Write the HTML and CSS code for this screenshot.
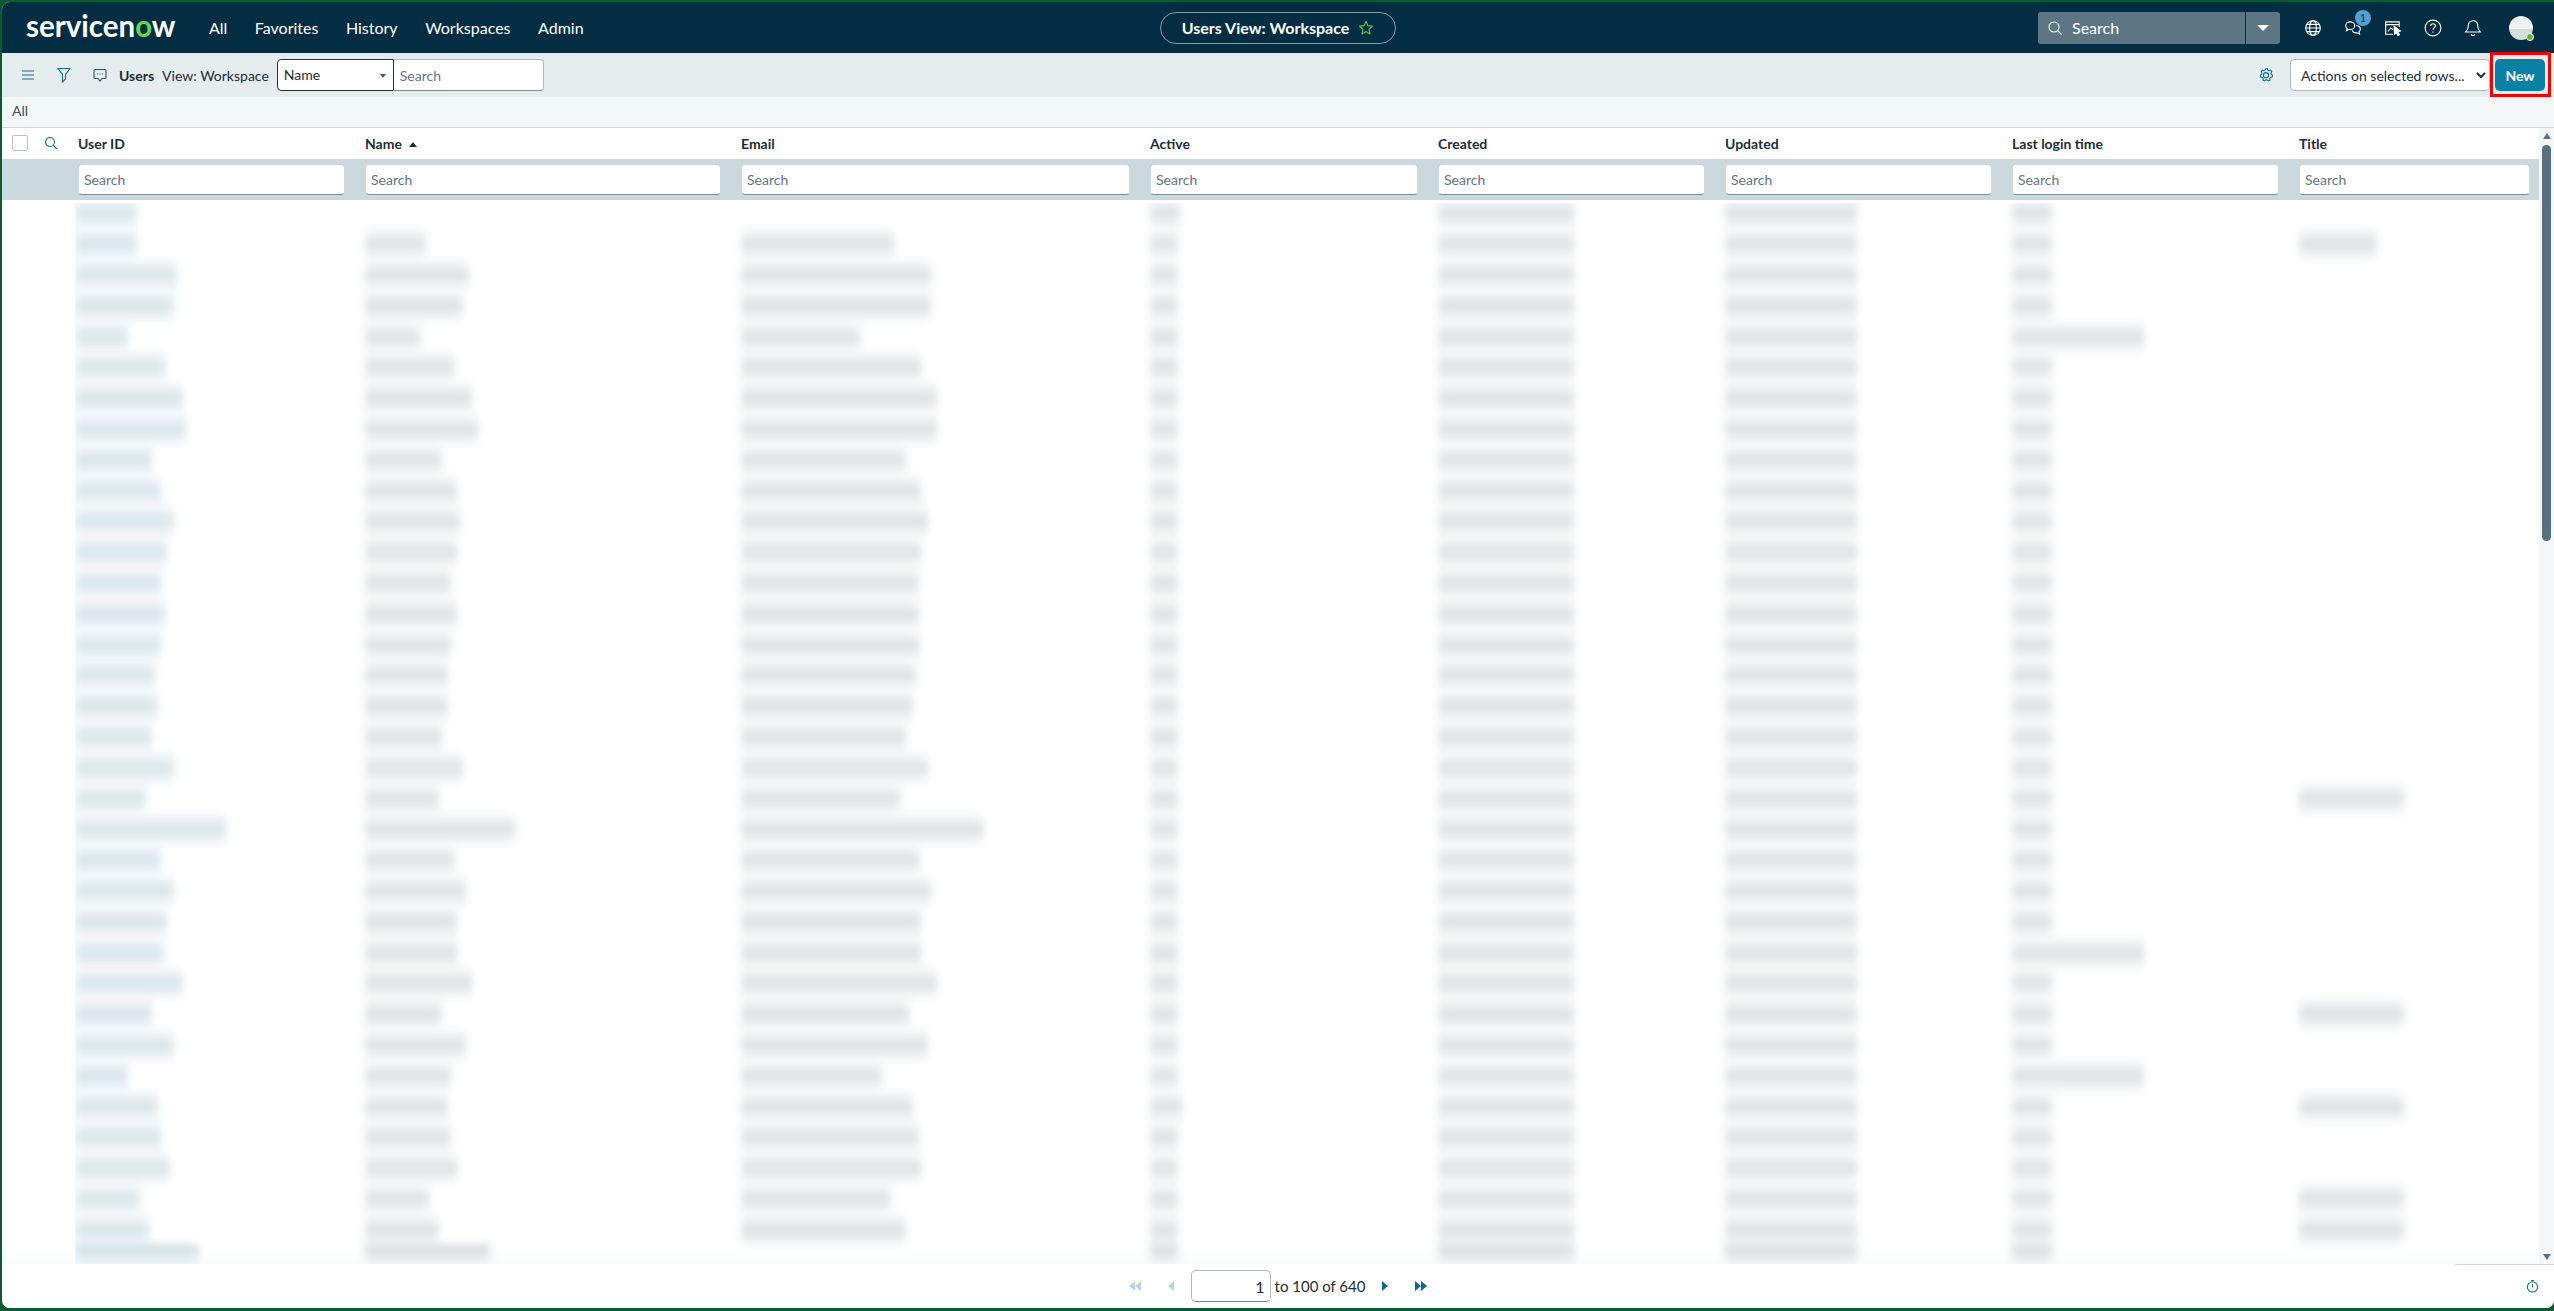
FILE: index.html
```html
<!DOCTYPE html>
<html lang="en">

<head>
    <meta charset="UTF-8">
    <title>Users View: Workspace</title>
    <link rel="stylesheet" href="styles.css">
</head>

<body>
    <div class="app">

        <header class="topbar">
            <div class="topbar-left">
                <span class="logo">servicen<span class="logo-o">o</span>w</span>
                <nav class="nav">
                    <a>All</a>
                    <a>Favorites</a>
                    <a>History</a>
                    <a>Workspaces</a>
                    <a>Admin</a>
                </nav>
            </div>
            <div class="pill">
                <span>Users View: Workspace</span>
                <svg class="pill-star" viewBox="0 0 16 16" width="16" height="16">
                    <path d="M8 1.500l1.900 4.200 4.600.5-3.400 3.100.9 4.600L8 11.600l-4 2.300.9-4.600L1.500 6.200l4.600-.5z" fill="none" stroke="#5cc04a" stroke-width="1.200" stroke-linejoin="round"/>
                </svg>
            </div>
            <div class="topbar-right">
                <div class="global-search">
                    <svg viewBox="0 0 16 16" width="16" height="16">
                        <circle cx="7" cy="7" r="5" fill="none" stroke="#fff" stroke-width="1.100"/>
                        <path d="M10.700 10.700l4 4" stroke="#fff" stroke-width="1.100"/>
                    </svg>
                    <span class="global-search-text">Search</span>
                    <span class="global-search-drop"><i class="caret-white"></i></span>
                </div>
                <div class="top-icons">
                    <svg class="top-icon" viewBox="0 0 16 16">
                        <circle cx="8" cy="8" r="6.500"/>
                        <ellipse cx="8" cy="8" rx="3" ry="6.500"/>
                        <path d="M1.500 8h13M2.400 4.800h11.200M2.400 11.200h11.200"/>
                    </svg>
                    <div class="chat-icon">
                        <svg class="top-icon" viewBox="0 0 16 16">
                            <path d="M5.500 2.500c-2.200 0-4 1.500-4 3.400 0 1 .5 1.900 1.300 2.500l-.5 1.900 2.200-1.100c.3.100.7.100 1 .1 2.200 0 4-1.500 4-3.400s-1.800-3.400-4-3.400z"/>
                            <path d="M10.800 5.800c2 .2 3.700 1.500 3.700 3.300 0 .9-.5 1.700-1.200 2.300l.5 1.900-2.200-1c-1.900.3-3.800-.6-4.300-2.200"/>
                        </svg>
                        <span class="badge">1</span>
                    </div>
                    <svg class="top-icon" viewBox="0 0 16 16">
                        <path d="M13.500 7V2.500h-12v11H8M1.500 5h12"/>
                        <path d="M3.500 11l2.500-3 2 1.500"/>
                        <path d="M9 6.500l5.500 4.200-2.300.5 1.500 2.800-1.300.6-1.400-2.800-1.600 1.500z" fill="#fff"/>
                    </svg>
                    <svg class="top-icon" viewBox="0 0 16 16">
                        <circle cx="8" cy="8" r="7"/>
                        <path d="M5.900 6.200c0-1.200 1-2 2.100-2s2.100.8 2.100 1.900c0 1.700-2.100 1.700-2.100 3.400"/>
                        <path d="M8 11.200v1"/>
                    </svg>
                    <svg class="top-icon" viewBox="0 0 16 16">
                        <path d="M8 1.500c-2.600 0-4.200 2-4.200 4.500 0 3.300-1.600 4.700-2.300 5.500h13c-.7-.8-2.300-2.200-2.300-5.500 0-2.500-1.600-4.500-4.200-4.500z"/>
                        <path d="M6.300 13.500c.3.800 1 1.200 1.700 1.200s1.400-.4 1.700-1.200"/>
                    </svg>
                    <div class="avatar"><span class="avatar-dot"></span></div>
                </div>
            </div>
        </header>

        <div class="toolbar">
            <svg class="tool-icon hamburger" viewBox="0 0 14 12">
                <path d="M1 2h12M1 6h12M1 10h12"/>
            </svg>
            <svg class="tool-icon funnel" viewBox="0 0 14 16">
                <path d="M1 1.500h12l-4.500 6v4.500l-3 3v-7.500z"/>
            </svg>
            <svg class="tool-icon bubble" viewBox="0 0 14 14">
                <path d="M2 1.500h10a1 1 0 0 1 1 1v7a1 1 0 0 1-1 1H9l-2 2.500-2-2.500H2a1 1 0 0 1-1-1v-7a1 1 0 0 1 1-1z"/>
                <path d="M4 6h1M6.500 6h1M9 6h1"/>
            </svg>
            <span class="toolbar-title">Users</span>
            <span class="toolbar-view">View: Workspace</span>
            <div class="search-group">
                <div class="search-field">Name<i class="caret-small"></i></div>
                <input class="search-input" type="text" placeholder="Search">
            </div>
            <div class="toolbar-right">
                <svg class="tool-icon gear" viewBox="0 0 16 16">
                    <path d="M8 1.500l1.300.1.500 1.500 1.200.6 1.500-.6 1.300 1.500-.8 1.400.2 1.300 1.300 1-.3 1.800-1.600.3-.8 1.100.2 1.600-1.700.8-1.200-1-1.300 0-1.200 1-1.700-.8.200-1.600-.8-1.100-1.600-.3-.3-1.800 1.300-1 .2-1.300-.8-1.400 1.300-1.500 1.500.6 1.200-.6z"/>
                    <circle cx="8" cy="8.200" r="2.600"/>
                </svg>
                <select class="actions-select">
                    <option>Actions on selected rows...</option>
                </select>
                <div class="new-wrap">
                    <button class="new-btn">New</button>
                </div>
            </div>
        </div>

        <div class="breadcrumb">All</div>

        <div class="main">
            <div class="table">
                <div class="grid head-row">
                    <div class="head-tools">
                        <span class="checkbox"></span>
                        <svg class="tool-icon head-search" viewBox="0 0 14 14">
                            <circle cx="6" cy="6" r="4.500"/>
                            <path d="M9.300 9.300l3.700 3.700"/>
                        </svg>
                    </div>
                    <div class="head-cell">User ID</div>
                    <div class="head-cell">Name <i class="sort-up"></i></div>
                    <div class="head-cell">Email</div>
                    <div class="head-cell">Active</div>
                    <div class="head-cell">Created</div>
                    <div class="head-cell">Updated</div>
                    <div class="head-cell">Last login time</div>
                    <div class="head-cell">Title</div>
                </div>
                <div class="grid filter-row">
                    <div></div>
                    <div class="filter-cell"><input type="text" placeholder="Search"></div>
                    <div class="filter-cell"><input type="text" placeholder="Search"></div>
                    <div class="filter-cell"><input type="text" placeholder="Search"></div>
                    <div class="filter-cell"><input type="text" placeholder="Search"></div>
                    <div class="filter-cell"><input type="text" placeholder="Search"></div>
                    <div class="filter-cell"><input type="text" placeholder="Search"></div>
                    <div class="filter-cell"><input type="text" placeholder="Search"></div>
                    <div class="filter-cell"><input type="text" placeholder="Search"></div>
                </div>
                <div class="table-body">
                    <div class="rows" id="rows"></div>
                </div>
            </div>
            <div class="scrollbar">
                <i class="scroll-up"></i>
                <div class="scroll-thumb"></div>
                <i class="scroll-down"></i>
            </div>
        </div>

        <footer class="footer">
            <div></div>
            <div class="pager">
                <svg class="pager-btn first off" viewBox="0 0 12 10"><path d="M6 0v10L0 5zM12 0v10L6 5z"/></svg>
                <svg class="pager-btn prev off" viewBox="0 0 6 10"><path d="M6 0v10L0 5z"/></svg>
                <input class="pager-input" type="text" value="1">
                <span class="pager-text">to 100 of 640</span>
                <svg class="pager-btn next" viewBox="0 0 6 10"><path d="M0 0v10l6-5z"/></svg>
                <svg class="pager-btn last" viewBox="0 0 12 10"><path d="M0 0v10l6-5zM6 0v10l6-5z"/></svg>
            </div>
            <svg class="tool-icon timer" viewBox="0 0 14 14">
                <circle cx="7" cy="8" r="5.500"/>
                <path d="M5.500 1h3M7 5v3.500"/>
            </svg>
        </footer>

    </div>
    <script src="script.js"></script>
</body>

</html>
```

FILE: styles.css
```css
* {
    box-sizing: border-box;
}

html,
body {
    height: 100%;
}

body {
    margin: 0;
    padding: 2px 0 3px 2px;
    background-color: #0c5a33;
    font-family: Lato, "Open Sans", sans-serif;
    font-size: 14px;
    color: #1d2d38;
    overflow: hidden;
}

input,
select,
button {
    font-family: inherit;
    font-size: 14px;
}

input::placeholder {
    color: #66757f;
}

.app {
    height: 100%;
    display: flex;
    flex-direction: column;
    background: white;
    border-radius: 8px 0 8px 8px;
    overflow: hidden;
}

/* top bar */
.topbar {
    height: 51px;
    flex: none;
    display: grid;
    grid-template-columns: 1fr auto 1fr;
    align-items: center;
    background-color: #032d42;
    color: white;
}

.topbar-left {
    display: flex;
    align-items: center;
    padding-left: 24px;
}

.logo {
    width: 183px;
    font-size: 29.500px;
    font-weight: 700;
    letter-spacing: 0;
    line-height: 28px;
    margin-top: -3px;
}

.logo-o {
    color: #62d84e;
}

.nav {
    display: flex;
    gap: 27.500px;
    font-size: 16px;
}

.pill {
    width: 236px;
    height: 32px;
    display: flex;
    align-items: center;
    justify-content: center;
    gap: 9px;
    border: 1px solid #8b9ba5;
    border-radius: 16px;
    font-size: 16px;
    font-weight: 700;
}

.topbar-right {
    display: flex;
    align-items: center;
    justify-content: flex-end;
    padding-right: 21px;
}

.global-search {
    width: 242px;
    height: 32px;
    display: flex;
    align-items: center;
    padding-left: 9px;
    background-color: #5c7684;
    border-radius: 3px;
    font-size: 16px;
}

.global-search-text {
    flex: 1;
    padding-left: 9px;
}

.global-search-drop {
    width: 35px;
    height: 32px;
    display: flex;
    align-items: center;
    justify-content: center;
    border-left: 1px solid #032d42;
}

.caret-white {
    border-left: 6px solid transparent;
    border-right: 6px solid transparent;
    border-top: 6px solid white;
}

.top-icons {
    display: flex;
    align-items: center;
    margin-left: 24px;
    gap: 22px;
}

.top-icon {
    display: block;
    width: 18px;
    height: 18px;
    flex: none;
    fill: none;
    stroke: white;
    stroke-width: 1;
}

.chat-icon {
    position: relative;
}

.badge {
    position: absolute;
    top: -9px;
    left: 11px;
    width: 16px;
    height: 16px;
    border-radius: 50%;
    background-color: #4f9fd8;
    color: #0d2c40;
    font-size: 11px;
    line-height: 16px;
    text-align: center;
}

.avatar {
    position: relative;
    width: 24px;
    height: 24px;
    margin-left: 5px;
    border-radius: 50%;
    background: linear-gradient(#eef2f1 55%, #d5dedc 55%);
}

.avatar-dot {
    position: absolute;
    right: -1px;
    bottom: -1px;
    width: 8px;
    height: 8px;
    border-radius: 50%;
    background-color: #62b02c;
    border: 1.500px solid white;
}

/* list toolbar */
.toolbar {
    height: 44px;
    flex: none;
    display: flex;
    align-items: center;
    background-color: #e5ecee;
    padding-right: 9px;
}

.tool-icon {
    flex: none;
    fill: none;
    stroke: #0b6f8f;
    stroke-width: 1.100;
}

.hamburger {
    width: 14px;
    height: 12px;
    margin-left: 19px;
}

.funnel {
    width: 14px;
    height: 16px;
    margin-left: 22px;
}

.bubble {
    width: 14px;
    height: 14px;
    margin-left: 22px;
    stroke: #32505f;
}

.toolbar-title {
    margin-left: 12px;
    font-weight: 700;
}

.toolbar-view {
    margin-left: 8px;
}

.search-group {
    display: flex;
    margin-left: 8px;
}

.search-field {
    position: relative;
    width: 117px;
    height: 32px;
    padding-left: 6px;
    line-height: 30px;
    background: white;
    border: 1px solid #23333f;
    border-radius: 4px 0 0 4px;
}

.caret-small {
    position: absolute;
    right: 7px;
    top: 14px;
    border-left: 3px solid transparent;
    border-right: 3px solid transparent;
    border-top: 4px solid #4a5a64;
}

.search-input {
    width: 150px;
    height: 32px;
    padding: 0 6px;
    background: white;
    border: 1px solid #a9bac3;
    border-left: none;
    border-bottom-color: #7d929e;
    border-radius: 0 4px 4px 0;
}

.toolbar-right {
    margin-left: auto;
    display: flex;
    align-items: center;
}

.gear {
    width: 16px;
    height: 16px;
    margin-right: 16px;
}

.actions-select {
    width: 200px;
    height: 32px;
    padding-left: 6px;
    color: #1d2d38;
    background: white;
    border: 1px solid #a9bac3;
    border-radius: 4px;
}

.new-wrap {
    position: relative;
    margin-left: 5px;
}

/* red box drawn on the screenshot */
.new-wrap::after {
    content: "";
    position: absolute;
    top: -7px;
    bottom: -6px;
    left: -5px;
    right: -6px;
    border: 3px solid #f00000;
}

.new-btn {
    display: block;
    width: 50px;
    height: 32px;
    padding: 0;
    color: white;
    background-color: #0b80a6;
    border: none;
    border-radius: 5px;
    font-weight: 700;
}

.breadcrumb {
    height: 31px;
    flex: none;
    padding: 5px 0 0 10px;
    color: #3e4f5a;
    background-color: #f3f7f7;
    border-bottom: 1px solid #cbd7dc;
}

/* table */
.main {
    flex: 1;
    min-height: 0;
    display: flex;
}

.table {
    flex: 1;
    min-width: 0;
    display: flex;
    flex-direction: column;
}

.grid {
    display: grid;
    grid-template-columns: 76px 287px 376px 409px 288px 287px 287px 287px 1fr;
}

.head-row {
    height: 31px;
    flex: none;
    align-items: center;
    padding-bottom: 1px;
}

.head-tools {
    display: flex;
    align-items: center;
}

.checkbox {
    width: 16px;
    height: 16px;
    margin-left: 10px;
    border: 1px solid #b4c3cb;
    border-radius: 2px;
}

.head-search {
    width: 14px;
    height: 14px;
    margin-left: 16px;
}

.head-cell {
    font-weight: 700;
}

.sort-up {
    display: inline-block;
    margin-left: 4px;
    vertical-align: 2px;
    border-left: 4px solid transparent;
    border-right: 4px solid transparent;
    border-bottom: 5px solid #1d2d38;
}

.filter-row {
    height: 41px;
    flex: none;
    align-items: center;
    background-color: #cbd8dd;
}

.filter-cell {
    padding-right: 20px;
}

.filter-cell:last-child {
    padding-right: 9px;
}

.filter-cell input {
    display: block;
    width: 100%;
    height: 31px;
    padding: 0 5px;
    background: white;
    border: 1px solid #cbd8dd;
    border-bottom-color: #7d929e;
    border-radius: 4px;
}

.table-body {
    position: relative;
    flex: 1;
    min-height: 0;
    margin-top: 3px;
    overflow: hidden;
}

/* soft fade above the footer */
.table-body::after {
    content: "";
    position: absolute;
    left: 0;
    right: 0;
    bottom: 0;
    height: 20px;
    background: linear-gradient(rgba(249, 251, 251, 0), rgba(249, 251, 251, 0.8));
}

.rows {
    margin-top: -5px;
}

.row {
    height: 30.800px;
    align-items: center;
}

.bar {
    height: 30px;
    background: linear-gradient(#f1f2f2 25%, #dfe1e4 38%, #dfe1e4 62%, #f1f2f2 75%);
    filter: blur(4px);
}

.cell-id {
    clip-path: inset(-20px -60px -20px 0);
    margin-left: -3px;
}

.cell-id .bar {
    background: linear-gradient(#edf3f5 25%, #d9e6ea 38%, #d9e6ea 62%, #edf3f5 75%);
}

.row:last-child .bar {
    background: #d3d7d9;
}

.row:last-child .cell-id .bar {
    background: #c6dae1;
}

/* scrollbar */
.scrollbar {
    width: 15px;
    flex: none;
    display: flex;
    flex-direction: column;
    align-items: center;
    padding: 5px 0 4px;
    background-color: #f3f7f7;
}

.scroll-up {
    border-left: 4px solid transparent;
    border-right: 4px solid transparent;
    border-bottom: 6px solid #55707f;
}

.scroll-thumb {
    width: 9px;
    height: 396px;
    margin-top: 6px;
    margin-bottom: auto;
    background-color: #55707f;
    border-radius: 5px;
}

.scroll-down {
    border-left: 4px solid transparent;
    border-right: 4px solid transparent;
    border-top: 6px solid #55707f;
}

/* footer */
.footer {
    position: relative;
    height: 44px;
    flex: none;
    display: grid;
    grid-template-columns: 1fr auto 1fr;
    align-items: center;
    background: white;
}

.footer::before {
    content: "";
    position: absolute;
    top: 0;
    right: 0;
    width: 99px;
    border-top: 1px solid #cbd8dd;
}

.pager {
    display: flex;
    align-items: center;
    font-size: 15px;
}

.pager-btn {
    height: 10px;
    flex: none;
    fill: #0b6a8b;
}

.pager-btn.off {
    fill: #b5d3dc;
}

.first {
    width: 12px;
}

.prev {
    width: 6px;
    margin-left: 27px;
}

.pager-input {
    width: 80px;
    height: 32px;
    margin-left: 17px;
    padding: 0 5px;
    font-size: 16px;
    text-align: right;
    color: #1d2d38;
    border: 1px solid #a9bac3;
    border-bottom-color: #6e8592;
    border-radius: 5px;
}

.pager-text {
    margin-left: 4px;
}

.next {
    width: 6px;
    margin-left: 17px;
}

.last {
    width: 12px;
    margin-left: 27px;
}

.timer {
    width: 13px;
    height: 14px;
    justify-self: end;
    margin-right: 15px;
}
```

FILE: script.js
```js
// widths of the masked values, one entry per row: id, name, email, active, created, updated, login, title
const widths = [
    [62, 0, 0, 30, 136, 132, 40, 0],
    [62, 61, 153, 28, 136, 132, 40, 78],
    [102, 104, 190, 28, 136, 132, 40, 0],
    [99, 98, 190, 28, 136, 132, 40, 0],
    [53, 55, 119, 28, 136, 132, 132, 0],
    [90, 89, 180, 28, 136, 132, 40, 0],
    [108, 107, 196, 28, 136, 132, 40, 0],
    [111, 113, 196, 28, 136, 132, 40, 0],
    [77, 77, 165, 28, 136, 132, 40, 0],
    [86, 92, 180, 28, 136, 132, 40, 0],
    [99, 95, 187, 28, 136, 132, 40, 0],
    [92, 92, 180, 28, 136, 132, 40, 0],
    [86, 86, 178, 28, 136, 132, 40, 0],
    [90, 92, 178, 28, 136, 132, 40, 0],
    [86, 86, 178, 28, 136, 132, 40, 0],
    [80, 83, 175, 28, 136, 132, 40, 0],
    [83, 83, 172, 28, 136, 132, 40, 0],
    [77, 77, 165, 28, 136, 132, 40, 0],
    [99, 98, 187, 28, 136, 132, 40, 0],
    [71, 74, 159, 28, 136, 132, 40, 105],
    [151, 150, 242, 28, 136, 132, 40, 0],
    [86, 89, 178, 28, 136, 132, 40, 0],
    [99, 101, 190, 28, 136, 132, 40, 0],
    [92, 92, 180, 28, 136, 132, 40, 0],
    [89, 92, 180, 28, 136, 132, 132, 0],
    [108, 107, 196, 28, 136, 132, 40, 0],
    [77, 77, 168, 28, 136, 132, 40, 105],
    [99, 101, 187, 28, 136, 132, 40, 0],
    [53, 86, 141, 28, 136, 132, 132, 0],
    [83, 83, 172, 32, 136, 132, 40, 105],
    [86, 86, 178, 28, 136, 132, 40, 0],
    [95, 92, 180, 28, 136, 132, 40, 0],
    [65, 64, 150, 28, 136, 132, 40, 105],
    [74, 74, 165, 28, 136, 132, 40, 105],
    [123, 125, 0, 28, 136, 132, 40, 0]
];

const rows = document.getElementById('rows');

widths.forEach(function (row) {
    const el = document.createElement('div');
    el.className = 'grid row';
    el.appendChild(document.createElement('div'));

    row.forEach(function (width, i) {
        const cell = document.createElement('div');
        if (i === 0) {
            cell.className = 'cell-id';
        }
        if (width > 0) {
            const bar = document.createElement('div');
            bar.className = 'bar';
            bar.style.width = width + 'px';
            cell.appendChild(bar);
        }
        el.appendChild(cell);
    });

    rows.appendChild(el);
});
```
